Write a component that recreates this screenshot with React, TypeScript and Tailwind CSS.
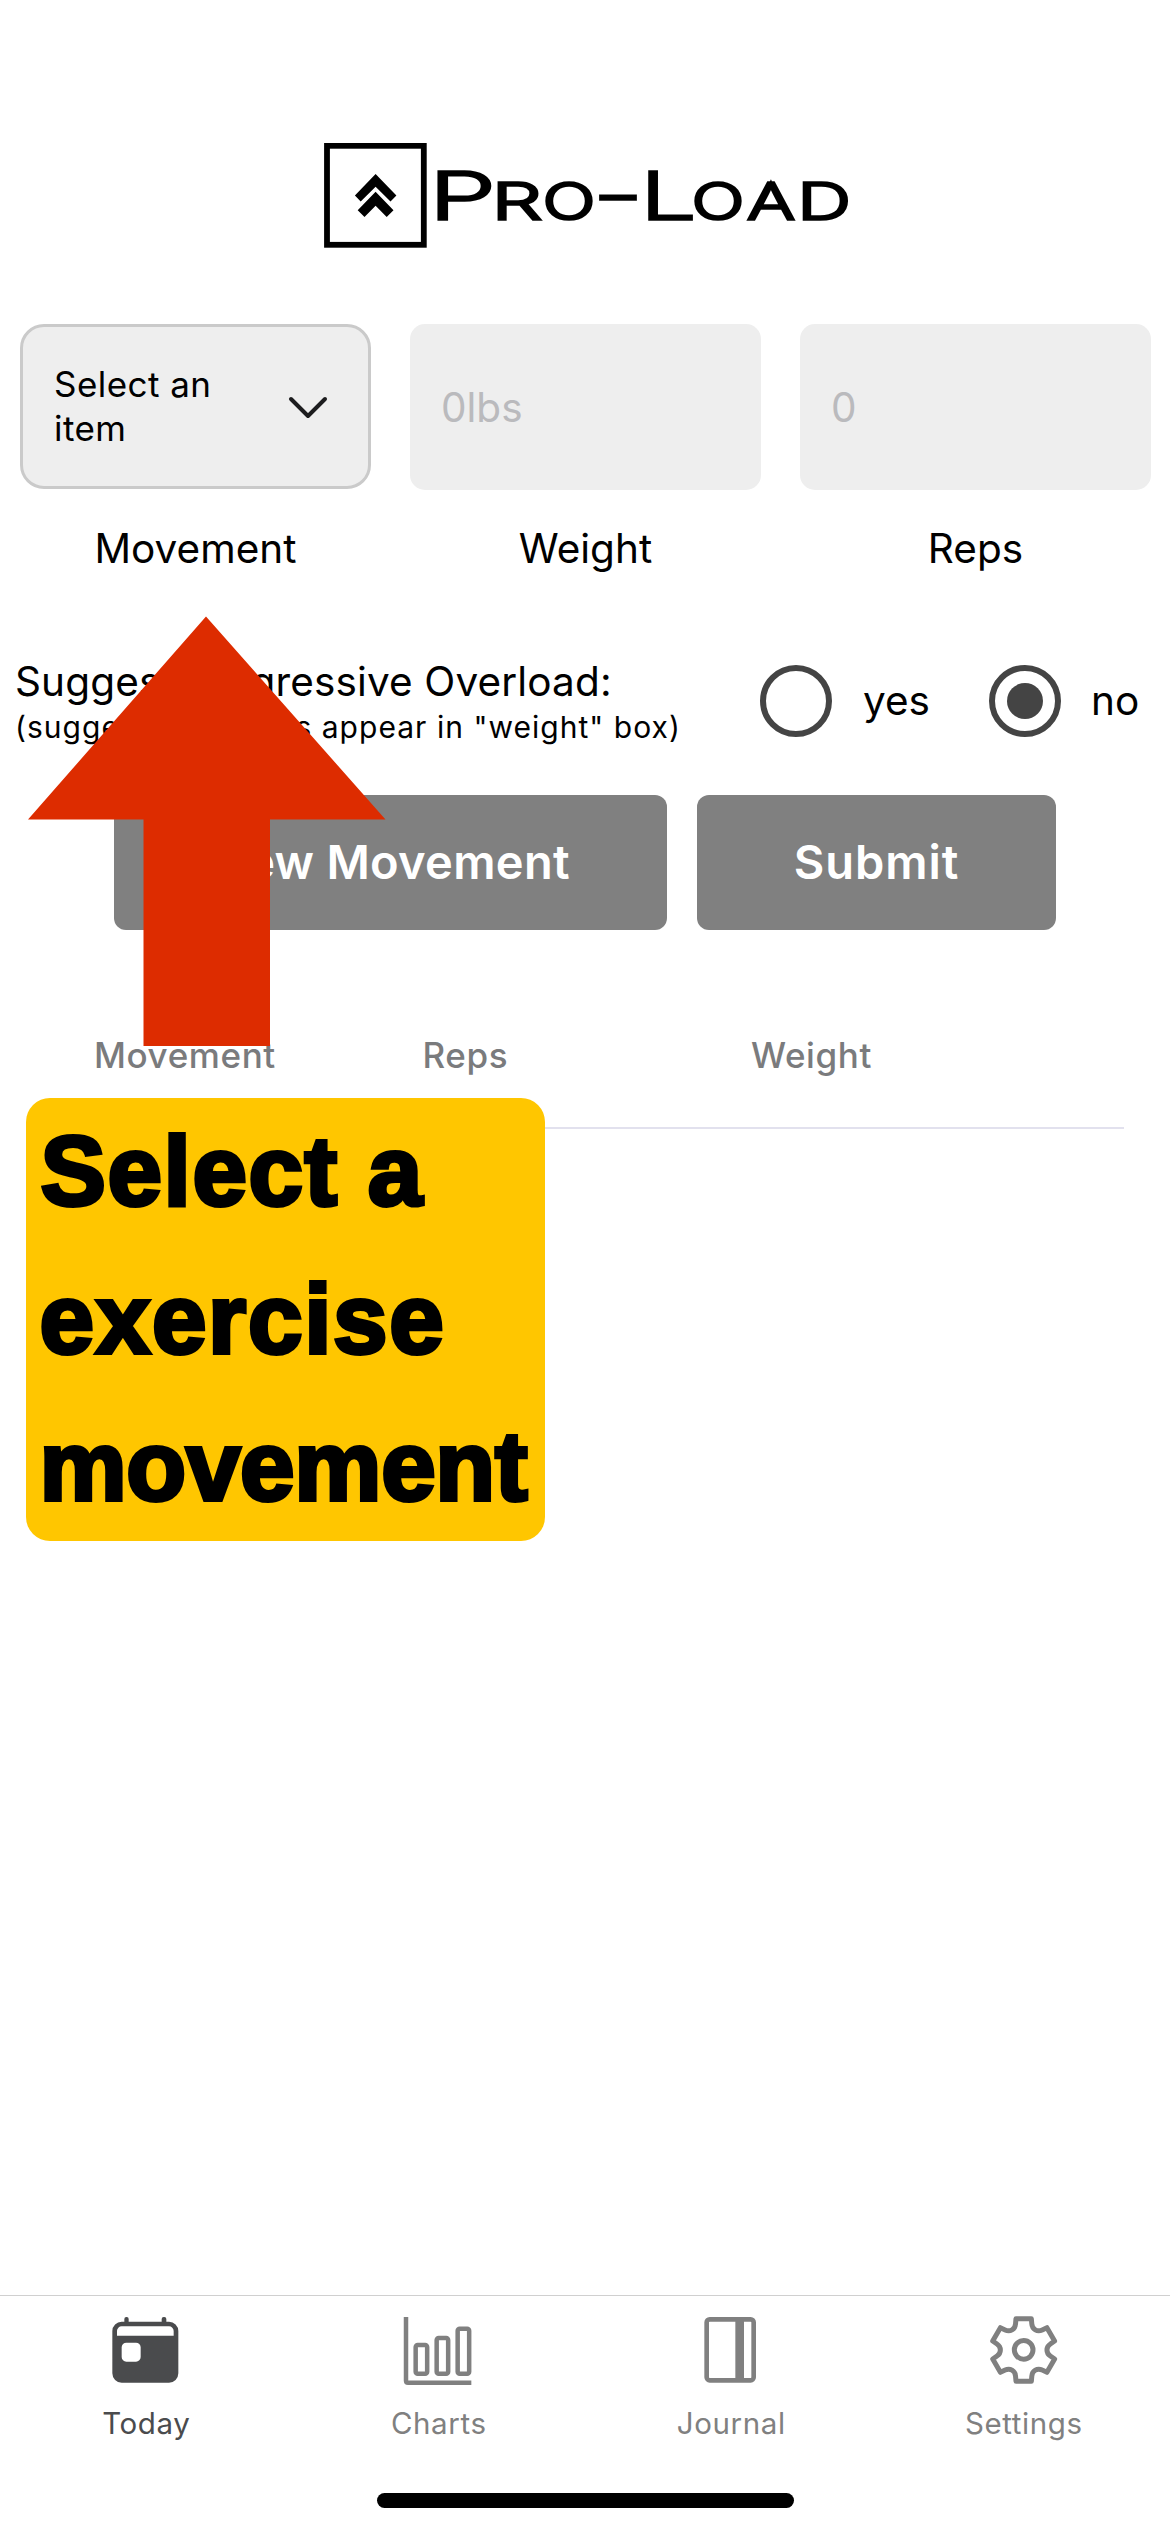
import type { ReactNode } from "react";

const wordmark = [
  { ch: "P", x: 429.1, len: 66.5, size: 64.4 },
  { ch: "r", x: 492.1, len: 49.5, size: 49.4 },
  { ch: "o", x: 543.1, len: 52, size: 49.4 },
  { ch: "-", x: 593, len: 50, size: 68 },
  { ch: "L", x: 640.6, len: 55.5, size: 64.4 },
  { ch: "o", x: 692.1, len: 52, size: 49.4 },
  { ch: "a", x: 747.7, len: 46.5, size: 49.4 },
  { ch: "d", x: 797.4, len: 53, size: 49.4 },
];

function Logo() {
  return (
    <svg className="ml-[324px] block h-[106px] w-[530px]" viewBox="324 143 530 106">
      <rect x="327" y="145.8" width="96.8" height="99" fill="none" stroke="#000" strokeWidth="5.8" />
      <path d="M375.6 174L396.4 195.5L390.5 201.5L375.6 186.7L360.7 201.5L354.9 195.5Z" />
      <path d="M375.6 191.7L393.5 210.3L386.7 217L375.6 205.7L364.5 217L357.7 210.3Z" />
      <text className="font-['Inter'] font-extralight uppercase" stroke="#000" strokeWidth="3.4">
        {wordmark.map((g, i) => (
          <tspan key={i} x={g.x} y={219.1} fontSize={g.size} textLength={g.len} lengthAdjust="spacingAndGlyphs">
            {g.ch}
          </tspan>
        ))}
      </text>
    </svg>
  );
}

function Field({ label, children }: { label: string; children: ReactNode }) {
  return (
    <div className="flex flex-col">
      <div className="h-[166px]">{children}</div>
      <div className="mt-[34px] text-center text-[40.5px] leading-[50px]">{label}</div>
    </div>
  );
}

function NumberBox({ value }: { value: string }) {
  return (
    <div className="flex h-full items-center rounded-[15px] bg-[#eeeeee] pt-[3px] pl-[31px] text-[40.5px] text-[#bababd]">
      {value}
    </div>
  );
}

function Radio({ checked }: { checked?: boolean }) {
  return (
    <div className="flex size-[72px] items-center justify-center rounded-full border-6 border-[#444444]">
      {checked && <div className="size-9 rounded-full bg-[#444444]" />}
    </div>
  );
}

function TodayIcon() {
  return (
    <svg className="size-[72px]" viewBox="151 102 216 216" fill="#4a4b4d">
      <rect x="194" y="111" width="13" height="26" rx="6" />
      <rect x="306" y="111" width="14" height="26" rx="6" />
      <path
        fillRule="evenodd"
        d="M186 125H328A28 28 0 0 1 356 153V280A28 28 0 0 1 328 308H186A28 28 0 0 1 158 280V153A28 28 0 0 1 186 125ZM172 167H342V153A14 14 0 0 0 328 139H186A14 14 0 0 0 172 153ZM200 188A14 14 0 0 0 186 202V231A14 14 0 0 0 200 245H229A14 14 0 0 0 243 231V202A14 14 0 0 0 229 188Z"
      />
    </svg>
  );
}

function ChartsIcon() {
  return (
    <svg className="size-[72px]" viewBox="1028 102 216 216" fill="none" stroke="#808080" strokeWidth="13.5">
      <path d="M1037 111V302Q1037 308 1043 308H1233" />
      <rect x="1066" y="195" width="34.5" height="86" rx="6" />
      <rect x="1129" y="174" width="34.5" height="107" rx="6" />
      <rect x="1192" y="146" width="34.5" height="135" rx="6" />
    </svg>
  );
}

function JournalIcon() {
  return (
    <svg className="size-[72px]" viewBox="166 102 216 216" fill="none" stroke="#808080" strokeWidth="14">
      <rect x="201" y="118" width="141" height="183" rx="9" />
      <path d="M300 118V301" strokeWidth="26" />
    </svg>
  );
}

function SettingsIcon() {
  const teeth = [0, 60, 120, 180, 240, 300].map((deg) => {
    const a = (deg * Math.PI) / 180;
    const p = (x: number, y: number) =>
      `${(1150 + x * Math.cos(a) - y * Math.sin(a)).toFixed(1)} ${(210 + x * Math.sin(a) + y * Math.cos(a)).toFixed(1)}`;
    return `${deg ? "L" : "M"}${p(69.8, -67)}L${p(92.8, -27)}L${p(80, -18)}C${p(66.5, -9)} ${p(66.5, 9)} ${p(80, 18)}`;
  });
  return (
    <svg className="size-[72px]" viewBox="1043 102 216 216" fill="none" stroke="#808080" strokeWidth="15" strokeLinejoin="round">
      <path d={teeth.join("") + "Z"} />
      <circle cx="1150" cy="209.5" r="28" />
    </svg>
  );
}

function Tab({ label, active, children }: { label: string; active?: boolean; children: ReactNode }) {
  return (
    <div className={active ? "flex flex-1 flex-col items-center text-[#4a4b4d]" : "flex flex-1 flex-col items-center text-[#808080]"}>
      {children}
      <div className="mt-[19px] text-[29.5px] leading-9 tracking-[0.6px]">{label}</div>
    </div>
  );
}

export default function App() {
  return (
    <div className="relative flex h-[2532px] w-[1170px] flex-col overflow-hidden bg-white font-['Inter',sans-serif] text-black">
      <header className="pt-[143px]">
        <Logo />
      </header>

      <section className="mt-[75px] grid grid-cols-[351px_351px_351px] gap-x-[39px] pl-5">
        <Field label="Movement">
          <div className="flex h-[165px] items-center justify-between rounded-3xl border-3 border-[#cacaca] bg-[#eeeeee] pr-10 pl-[31px]">
            <div className="w-[170px] text-[35px] leading-[43.3px] tracking-[0.45px]">Select an item</div>
            <svg className="h-6 w-10" viewBox="0 0 40 24" fill="none" stroke="#1c1c1e" strokeWidth="4" strokeLinecap="round" strokeLinejoin="round">
              <path d="M3 4L20 21L37 4" />
            </svg>
          </div>
        </Field>
        <Field label="Weight">
          <NumberBox value="0lbs" />
        </Field>
        <Field label="Reps">
          <NumberBox value="0" />
        </Field>
      </section>

      <section className="mt-[83px] flex h-[90px] items-start pl-[15px]">
        <div className="w-[745px] whitespace-nowrap">
          <div className="text-[40.5px] leading-[50px] tracking-[0.14px]">Suggest Progressive Overload:</div>
          <div className="mt-0.5 text-[30px] leading-9 tracking-[1.03px]">(suggested weights appear in "weight" box)</div>
        </div>
        <div className="mt-2 flex items-center text-[40.5px] leading-[72px]">
          <Radio />
          <span className="ml-[31px] w-[126px]">yes</span>
          <Radio checked />
          <span className="ml-[30px]">no</span>
        </div>
      </section>

      <section className="mt-12 flex gap-[30px] pl-[114px] text-[47px] font-semibold text-white">
        <div className="flex h-[135px] w-[553px] items-center justify-center rounded-xl bg-[#808080] tracking-[0.3px]">New Movement</div>
        <div className="flex h-[135px] w-[359px] items-center justify-center rounded-xl bg-[#808080] tracking-[0.9px]">Submit</div>
      </section>

      <section className="mx-[46px] mt-[53px] grid h-[146px] grid-cols-[328.5px_328.5px_1fr] border-b-2 border-[#e2e1ee] pl-[48px] text-[35px] leading-[144px] font-medium tracking-[0.6px] text-[#7a7b7d]">
        <div>Movement</div>
        <div>Reps</div>
        <div>Weight</div>
      </section>

      <footer className="mt-auto flex h-[237px] flex-col border-t border-[#d0d0d0]">
        <nav className="flex pt-[18px]">
          <Tab label="Today" active>
            <TodayIcon />
          </Tab>
          <Tab label="Charts">
            <ChartsIcon />
          </Tab>
          <Tab label="Journal">
            <JournalIcon />
          </Tab>
          <Tab label="Settings">
            <SettingsIcon />
          </Tab>
        </nav>
        <div className="mx-auto mt-auto mb-6 h-[15px] w-[417px] rounded-full bg-black" />
      </footer>

      <svg className="absolute top-[616px] left-[28px] h-[430px] w-[358px]" viewBox="0 0 358 430" fill="#dd2c00">
        <path d="M178 0.5L357.5 203.5H242V430H115.5V203.5H0Z" />
      </svg>

      <div className="absolute top-[1098px] left-[26px] h-[443px] w-[519px] rounded-[24px] bg-[#ffc600] pl-[14.5px] font-['Liberation_Sans',sans-serif] text-[98px] leading-[147.7px] font-bold whitespace-nowrap [-webkit-text-stroke:4px_#000]">
        <div className="tracking-[1.6px]">Select a</div>
        <div className="ml-[-1px] tracking-[1.7px]">exercise</div>
        <div className="ml-[-1px] tracking-[-0.3px]">movement</div>
      </div>
    </div>
  );
}
